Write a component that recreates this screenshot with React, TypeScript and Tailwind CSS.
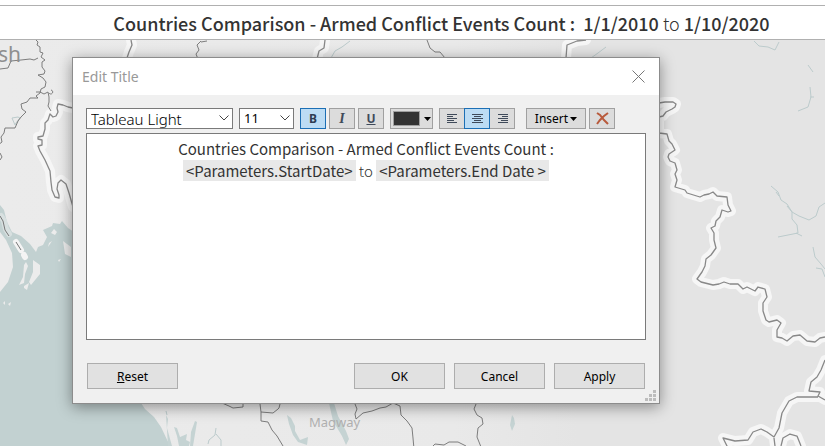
import React from 'react';

function MapLabel({ x, y, size, fill, children }: { x: number; y: number; size: number; fill: string; children: string }) {
  return (
    <text x={x} y={y} fontSize={size} fill={fill} fontFamily="'Noto Sans', sans-serif">
      {children}
    </text>
  );
}

const borders = [
  'M131 40l1 5-3 7-2 6',
  'M325 40l-1 8-5 3-2 8',
  'M586 40l-9 1-10 4-1 13',
  'M73 108L68 107 63 105 58 104 57 108 58 112 56 116 53 117 50 114 48 120 45 123 45 129 43 136 38 137 38 139 42 140 42 145 38 146 40 151 45 160 50 171 51 182 52 190 55 197 59 198 59 195 57 189 58 183 61 180 66 184 69 193 73 207',
  'M659 103L665 102 673 102 676 104 675 107 672 109 666 112 663 116 659 117V133L667 134 669 141 672 144 675 150 669 154 668 157 670 161 675 163 677 170 675 174 677 180 675 187 685 190 687 193 700 197 704 195 709 194 713 192 717 196 727 197 728 205 731 211 728 212 722 210 720 217 716 221 715 226 711 228 714 233 714 240 716 248 711 255 706 259 705 266 702 272 697 279 701 282 713 285 719 284 724 282 730 284 738 284 743 289 747 287 755 291 758 287 765 289 767 297 763 303 763 311 766 320 769 322 777 320 781 323 777 330 777 337 782 338 787 341 793 336 800 335 807 341 815 342 820 338 825 337',
  'M825 360l-4 10-4 7-6 5-2 9 11 1-2 4 7 4M818 397l-21 0-8 4-7 12-3 15-5 9-7-5-6-3-8 3-5 8-13 1-12-3 5 10M774 438l1 8M781 446l2-8 7-4 7 2 4 10',
];

const districts = [
  'M36 40l2 2-1 3 3 2 0 5 3 1-2 4 4 3-3 2 0 5 3 4-1 3-6 1 5 3 3 4-1 5-4 2-1 4-4 3 2 2-8 0-3 4-6 2 1 5 4 3-5 5-3 4-3 7-10 0-1 5-3 4 1 5-4 3',
  'M36 92l4 0 4 2 4-2 1 5 0 5-1 4 3 5M49 93a2 2 0 1 0 2-3',
  'M0 69l8-1 3-7 10-1 9-1 4 1 4-2M0 160l2-3-2-4',
  'M201 41l-4 4 2 5-3 4 2 5M207 41l-6 1',
  'M427 40l3 8 5 4 5 0 5 6',
  'M260 404l1 8 12 1 5-4 1-1 1-4M261 412l0 9 7 1 4 8 5 6 6 10M222 403l7 3 4 2 10-1 0-3M355 404l2 5-2 5 1 5 7-6 9-2 8-3 6-1 7-4 7 3 1 9 6 6 5 7 1 10 1 11 8 2',
  'M476 404l-2 5 3 6 5 3 1 6-5 4-1 9 4 10M433 446l2-2 9 1 5-3 9 0 8 4',
];

const rivers = [
  'M771 186l7 6 3 8 6 4 5 8 7 4 10 4 7-4 3-9 6-4M792 212l0 7 5 6 1 8-20 4M792 212l-5-6M776 192l3 4M796 233l6 3M813 247l2 10 6 7 4 5M816 268l6 1 3 8',
  'M754 41l5 5 9 1 7 3 4-8M350 41l-8 6-7 4-4 7M606 47l-8 6-7 5M808 65l5 7M810 87l1 10-3 10-10 4M810 97l4 0',
  'M12 118l6-1 2 1-4 5-1 2zM216 428l-1 7-6 5-1 4M216 434l5 6 0 6M166 411l1 4',
];

function MapBackdrop() {
  return (
    <svg className="absolute inset-0 h-full w-full" viewBox="0 40 825 406" preserveAspectRatio="xMinYMin slice" aria-hidden="true">
      <defs>
        <linearGradient id="land" x1="0" x2="1">
          <stop offset="0" stopColor="#ebebeb" />
          <stop offset=".55" stopColor="#e9e9e9" />
          <stop offset=".7" stopColor="#e4e4e4" />
        </linearGradient>
      </defs>
      <rect y="40" width="825" height="406" fill="url(#land)" />
      <path fill="#c2d1d1" d="M0 205l4 5 3 12 5 10 9 4 9 8 6 8 2-5 5-2 4-8-4-7 9-4 1-3 7 1 2-3 6 7 6 4V403h67l4 6 9 8 7 10 9 19H0z" />
      <g fill="#ececec">
        <path d="M0 232l6 8 6 13 1 14-5 15-8 10zM33 260l7 5 0 9-9 11-2-3 4-10zM63 241l8 6 0 10-6-3zM54 229l3 3-2 3-4-2zM52 241l-4 6 1-4zM58 260l3-1-2 3zM24 286l5-3-2 7-3-2zM3 303l2-2 0 4zM8 304l3-2-1 4z" />
        <path d="M26 262l2 4-3 8-1 9-5 2 4-8 1-12z" />
      </g>
      <path d="M1 216l3 5 2 8 3 5" fill="none" stroke="#d8e0e0" strokeWidth="6" strokeLinecap="round" />
      <path d="M16 242l5 8M24 255l1 2" fill="none" stroke="#f4f4f4" strokeWidth="6" strokeLinecap="round" />
      <path d="M0 216l3 5 2 9 4 6M16 242l5 8" fill="none" stroke="#777" />
      <g fill="none" stroke="#bccbcc">
        {rivers.map((d) => <path key={d} d={d} />)}
      </g>
      <path fill="#c5d3d3" d="M329 403l5 0 4 13 8 15 3 8-3 6-4-9-9-15zM287 415l4 3 4 8 0 5 5 9 8-3-1 8-9-3-5-7-4-11zM512 415l2 3 1 6-3 7-2-6zM166 415l2 4-1 9 5 18h-4zM174 427l3 1 3 9 7-3-1 6 4 2-1 4h-10l-2-10zM195 421l2 1-2 12-2 12h-3l1-14z" />
      <g fill="none" stroke="#f6f6f6" strokeWidth="10" strokeLinejoin="round" strokeLinecap="round">
        {borders.map((d) => <path key={d} d={d} />)}
      </g>
      <g fill="none" stroke="#888" strokeWidth="1.3" strokeLinejoin="round">
        {borders.map((d) => <path key={d} d={d} />)}
      </g>
      <g fill="none" stroke="#707070" strokeWidth=".9" strokeLinejoin="round">
        {districts.map((d) => <path key={d} d={d} />)}
      </g>
      <MapLabel x={-2} y={62} size={21} fill="#8f8f8f">sh</MapLabel>
      <MapLabel x={309} y={427} size={13} fill="#b0b0b0">Magway</MapLabel>
    </svg>
  );
}

function SelectBox({ label, value, width, font }: { label: string; value: string; width: string; font: string }) {
  return (
    <div className={`relative h-[21px] ${width}`}>
      <select aria-label={label} className={`block h-full w-full appearance-none overflow-hidden border border-[#7a7a7a] bg-white pl-1 text-black ${font}`}>
        <option>{value}</option>
      </select>
      <svg className="pointer-events-none absolute top-[7px] right-1 h-[6px] w-[10px]" viewBox="0 0 10 6" fill="none" stroke="#444" aria-hidden="true">
        <path d="M.5.5 5 5 9.5.5" />
      </svg>
    </div>
  );
}

function ToolButton({ label, active, width = 'w-[26px]', children }: { label: string; active?: boolean; width?: string; children: React.ReactNode }) {
  return (
    <button
      type="button"
      aria-label={label}
      aria-pressed={active}
      className={`flex h-[21px] items-center justify-center border ${width} ${active ? 'z-10 border-[#1c6fb5] bg-[#bcdcf4]' : 'border-[#a0a0a0] bg-[#dcdcdc]'}`}
    >
      {children}
    </button>
  );
}

function AlignIcon({ d }: { d: string }) {
  return (
    <svg className="h-[10px] w-[11px]" viewBox="0 0 11 10" fill="none" stroke="#3f4a5a" shapeRendering="crispEdges" aria-hidden="true">
      <path d={d} />
    </svg>
  );
}

function Caret() {
  return (
    <svg className="h-1 w-[7px]" viewBox="0 0 7 4" aria-hidden="true">
      <path d="M0 0h7L3.5 4z" />
    </svg>
  );
}

function DialogButton({ children }: { children: React.ReactNode }) {
  return (
    <button type="button" className="h-[26px] w-[91px] border border-[#adadad] bg-[#e1e1e1] pt-px font-['Noto_Sans',sans-serif] text-xs text-black">
      {children}
    </button>
  );
}

export default function App() {
  return (
    <div className="flex min-h-screen flex-col bg-white pt-[5px] font-['Noto_Sans',sans-serif]">
      <header className="border-y border-[#b0b0b0] pr-[2px] pl-[60px]">
        <h1 className="h-[33px] text-center font-['Noto_Sans_CJK_SC','Noto_Sans',sans-serif] text-lg leading-[34px] font-medium whitespace-pre text-[#333]">
          {'Countries Comparison - Armed Conflict Events Count :  1/1/2010 '}
          <span className="font-light">to</span>
          {' 1/10/2020'}
        </h1>
      </header>
      <main className="relative flex-1 overflow-hidden pt-[17px] pr-4 pb-[42px] pl-[72px]">
        <MapBackdrop />
        <section role="dialog" aria-labelledby="dialog-title" className="relative w-full max-w-[588px] border border-[#8c8c8c] bg-[#f0f0f0] shadow-[0_3px_14px_rgba(0,0,0,0.4)]">
          <div className="flex h-[37px] items-center justify-between bg-white pr-[14px] pl-[9px]">
            <h2 id="dialog-title" className="text-sm text-[#999]">Edit Title</h2>
            <button type="button" aria-label="Close">
              <svg className="h-[13px] w-[13px]" viewBox="0 0 13 13" stroke="#777" aria-hidden="true">
                <path d="M.5.5l12 12M12.5.5l-12 12" />
              </svg>
            </button>
          </div>
          <div className="px-[13px] pt-[13px] pb-[14px]">
            <div className="flex">
              <SelectBox label="Font" value="Tableau Light" width="w-[147px]" font="font-light text-[15px] leading-[21px]" />
              <div className="w-[6px]" />
              <SelectBox label="Font size" value="11" width="w-[55px]" font="text-[13px]" />
              <div className="ml-[6px] flex gap-[3px]">
                <ToolButton label="Bold" active><b className="text-xs text-[#2f3d52]">B</b></ToolButton>
                <ToolButton label="Italic"><i className="font-['Liberation_Serif',serif] text-sm font-bold text-[#3f4a5a]">I</i></ToolButton>
                <ToolButton label="Underline"><u className="text-xs font-bold text-[#3f4a5a]">U</u></ToolButton>
              </div>
              <div className="ml-[6px] flex">
                <ToolButton label="Text color" width="w-[43px]">
                  <span className="mr-1 h-[15px] w-[27px] border border-[#a0a0a0] bg-[#333]" />
                  <Caret />
                </ToolButton>
              </div>
              <div className="ml-[6px] flex -space-x-px">
                <ToolButton label="Align left"><AlignIcon d="M0 .5h10M0 2.5h6M0 4.5h10M0 6.5h7M0 8.5h10" /></ToolButton>
                <ToolButton label="Align center" active><AlignIcon d="M0 .5h11M2 2.5h7M0 4.5h11M2 6.5h7M0 8.5h11" /></ToolButton>
                <ToolButton label="Align right"><AlignIcon d="M1 .5h10M5 2.5h6M1 4.5h10M4 6.5h7M1 8.5h10" /></ToolButton>
              </div>
              <div className="ml-[11px] flex gap-[3px]">
                <ToolButton label="Insert" width="w-[60px]">
                  <span className="mr-[2px] text-xs text-black">Insert</span>
                  <Caret />
                </ToolButton>
                <ToolButton label="Clear">
                  <svg className="h-[13px] w-[13px]" viewBox="0 0 13 13" fill="none" stroke="#b85a3c" strokeWidth="2" aria-hidden="true">
                    <path d="M1 1l3 2 4 5 4 4M12 1L8 4 4 8l-3 4" />
                  </svg>
                </ToolButton>
              </div>
            </div>
            <div
              role="textbox"
              aria-label="Title text"
              aria-multiline="true"
              contentEditable
              suppressContentEditableWarning
              className="mt-1 h-[207px] border border-[#7a7a7a] bg-white pt-1 text-center font-['Noto_Sans_CJK_SC','Noto_Sans',sans-serif] text-[15px] leading-[22px] text-[#333]"
            >
              <p>Countries Comparison - Armed Conflict Events Count :</p>
              <p>
                <span className="bg-[#e8e8e8] px-[3px]">&lt;Parameters.StartDate&gt;</span>
                <span className="font-light"> to </span>
                <span className="bg-[#e8e8e8] px-[3px]">&lt;Parameters.End Date &gt;</span>
              </p>
            </div>
            <div className="mt-[23px] flex gap-[9px] pr-px pl-px">
              <DialogButton><u>R</u>eset</DialogButton>
              <div className="flex-1" />
              <DialogButton>OK</DialogButton>
              <DialogButton>Cancel</DialogButton>
              <DialogButton>Apply</DialogButton>
            </div>
          </div>
          <svg className="absolute right-[3px] bottom-[2px] h-[11px] w-[11px]" viewBox="0 0 11 11" fill="#bdbdbd" aria-hidden="true">
            <path d="M8 0h3v3H8zM4 4h3v3H4zM8 4h3v3H8zM0 8h3v3H0zM4 8h3v3H4zM8 8h3v3H8z" />
          </svg>
        </section>
      </main>
    </div>
  );
}
